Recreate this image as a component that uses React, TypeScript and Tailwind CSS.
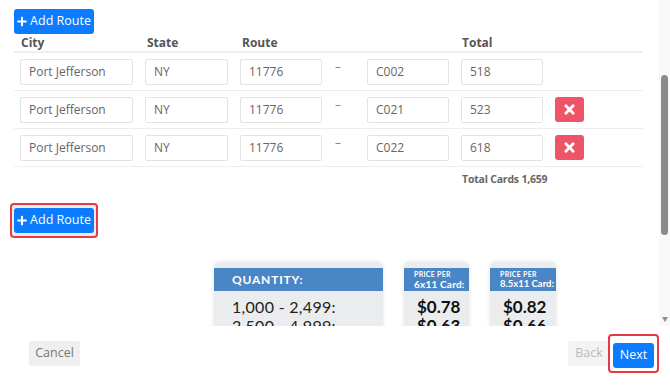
import { FaPlus, FaTimes } from "react-icons/fa";

const rows = [
  { city: "Port Jefferson", state: "NY", route: "11776", code: "C002", total: "518", removable: false },
  { city: "Port Jefferson", state: "NY", route: "11776", code: "C021", total: "523", removable: true },
  { city: "Port Jefferson", state: "NY", route: "11776", code: "C022", total: "618", removable: true },
];

const cols = "grid grid-cols-[113px_83px_82px_21px_82px_82px_29px] gap-x-3";

const Field = ({ value }: { value: string }) => (
  <div className="h-[26px] border border-[#e3e3e3] rounded-[2px] flex items-center pl-[8px] text-[12px] text-[#666]">
    {value}
  </div>
);

const AddRoute = () => (
  <button className="h-[25px] w-[80px] rounded-[3px] bg-[#0b7bff] text-white text-[12.5px] flex items-center justify-center gap-[3px]">
    <FaPlus className="w-[10px] h-[11px]" />
    Add Route
  </button>
);

const App = () => {
  return (
    <div className="w-[670px] h-[391px] bg-white flex flex-col overflow-hidden" style={{ fontFamily: '"Open Sans", "Liberation Sans", sans-serif' }}>
      {/* Scrollable body */}
      <div className="h-[326px] flex">
        <div className="flex-1 overflow-hidden pl-[14px] pr-[16px] pt-[9px]">
          <AddRoute />

          {/* Table header */}
          <div className={`${cols} px-[6px] h-[19px] items-end pb-[1px] border-b-2 border-[#eeeeee] text-[12px] font-bold text-[#555]`}>
            <span className="pl-[1px]">City</span>
            <span className="pl-[2px]">State</span>
            <span className="pl-[2px]">Route</span>
            <span />
            <span />
            <span className="pl-[1px]">Total</span>
            <span />
          </div>

          {/* Rows */}
          {rows.map((r, i) => (
            <div key={i} className={`${cols} px-[6px] h-[38px] items-center border-b border-[#eeeeee]`}>
              <Field value={r.city} />
              <Field value={r.state} />
              <Field value={r.route} />
              <span className="self-start pt-[5px] pl-[1px] text-[12px] text-[#888]">–</span>
              <Field value={r.code} />
              <Field value={r.total} />
              {r.removable ? (
                <button className="h-[25px] w-[29px] rounded-[3px] bg-[#ee5468] text-white flex items-center justify-center">
                  <FaTimes className="w-[11px] h-[15px]" />
                </button>
              ) : (
                <span />
              )}
            </div>
          ))}

          <div className={`${cols} px-[6px] h-[26px] items-center`}>
            <span className="col-start-6 col-span-2 pl-[1px] text-[10.5px] font-bold text-[#666] whitespace-nowrap tracking-[-0.2px]">Total Cards 1,659</span>
          </div>

          {/* Highlighted Add Route */}
          <div className="mt-[10px] ml-[-4px] inline-block border-2 border-[#e53a45] rounded-[4px] px-[2px] py-[3px] bg-[#ebebeb]">
            <AddRoute />
          </div>

          {/* Pricing table image */}
          <div className="mt-[24px] flex gap-[21px] pl-[200px]" style={{ fontFamily: 'Lato, "Noto Sans", sans-serif' }}>
            <div className="w-[169px] h-[80px] rounded-t-[6px] bg-[#ebecee] pt-[6px] shadow-[0_0_4px_rgba(0,0,0,0.12)]">
              <div className="h-[23px] bg-[#4a86c6] flex items-center pl-[18px] text-white text-[12px] font-bold tracking-[0.8px]">QUANTITY:</div>
              <div className="pl-[18px] pt-[6px] text-[16px] text-[#222] leading-[19px] tracking-[0.3px]">
                <div>1,000 - 2,499:</div>
                <div>2,500 - 4,999:</div>
              </div>
            </div>
            <div className="w-[65px] h-[80px] rounded-t-[6px] bg-[#ebecee] pt-[6px] shadow-[0_0_4px_rgba(0,0,0,0.12)]">
              <div className="h-[23px] bg-[#4a86c6] flex flex-col justify-center pl-[10px] text-white leading-none whitespace-nowrap">
                <span className="text-[7px] font-bold tracking-[0.3px]">PRICE PER</span>
                <span className="text-[10px] font-bold mt-[1px] tracking-[0.2px]">6x11 Card:</span>
              </div>
              <div className="pl-[13px] pt-[6px] text-[17px] font-bold text-[#111] leading-[19px]">
                <div>$0.78</div>
                <div>$0.63</div>
              </div>
            </div>
            <div className="w-[66px] h-[80px] rounded-t-[6px] bg-[#ebecee] pt-[6px] shadow-[0_0_4px_rgba(0,0,0,0.12)]">
              <div className="h-[23px] bg-[#4a86c6] flex flex-col justify-center pl-[10px] text-white leading-none whitespace-nowrap">
                <span className="text-[7px] font-bold tracking-[0.3px]">PRICE PER</span>
                <span className="text-[9.5px] font-bold mt-[1px]">8.5x11 Card:</span>
              </div>
              <div className="pl-[13px] pt-[6px] text-[17px] font-bold text-[#111] leading-[19px]">
                <div>$0.82</div>
                <div>$0.66</div>
              </div>
            </div>
          </div>
        </div>

        {/* Scrollbar */}
        <div className="w-[11px] bg-[#f8f8f8] flex flex-col items-center">
          <div className="mt-[75px] w-[7px] h-[160px] rounded-full bg-[#8b8b8b]" />
          <div className="flex-1" />
          <div className="mb-[4px] w-0 h-0 border-l-[3.5px] border-r-[3.5px] border-t-[5px] border-l-transparent border-r-transparent border-t-[#8b8b8b]" />
        </div>
      </div>

      {/* Footer */}
      <div className="flex-1 flex items-start justify-between pl-[29px] pr-[11px] pt-[8px]">
        <button className="mt-[7px] h-[25px] w-[51px] rounded-[3px] bg-[#efefef] text-[12.5px] text-[#777]">Cancel</button>
        <div className="flex items-start">
          <button className="mt-[7px] -mr-[2px] h-[25px] w-[42px] rounded-[3px] bg-[#f3f3f3] text-[12.5px] text-[#bbb]">Back</button>
          <div className="border-2 border-[#e53a45] rounded-[4px] px-[3px] pt-[5px] pb-[3px]">
            <button className="h-[25px] w-[41px] rounded-[3px] bg-[#0b7bff] text-[12.5px] text-white">Next</button>
          </div>
        </div>
      </div>
    </div>
  );
};

export default App;
